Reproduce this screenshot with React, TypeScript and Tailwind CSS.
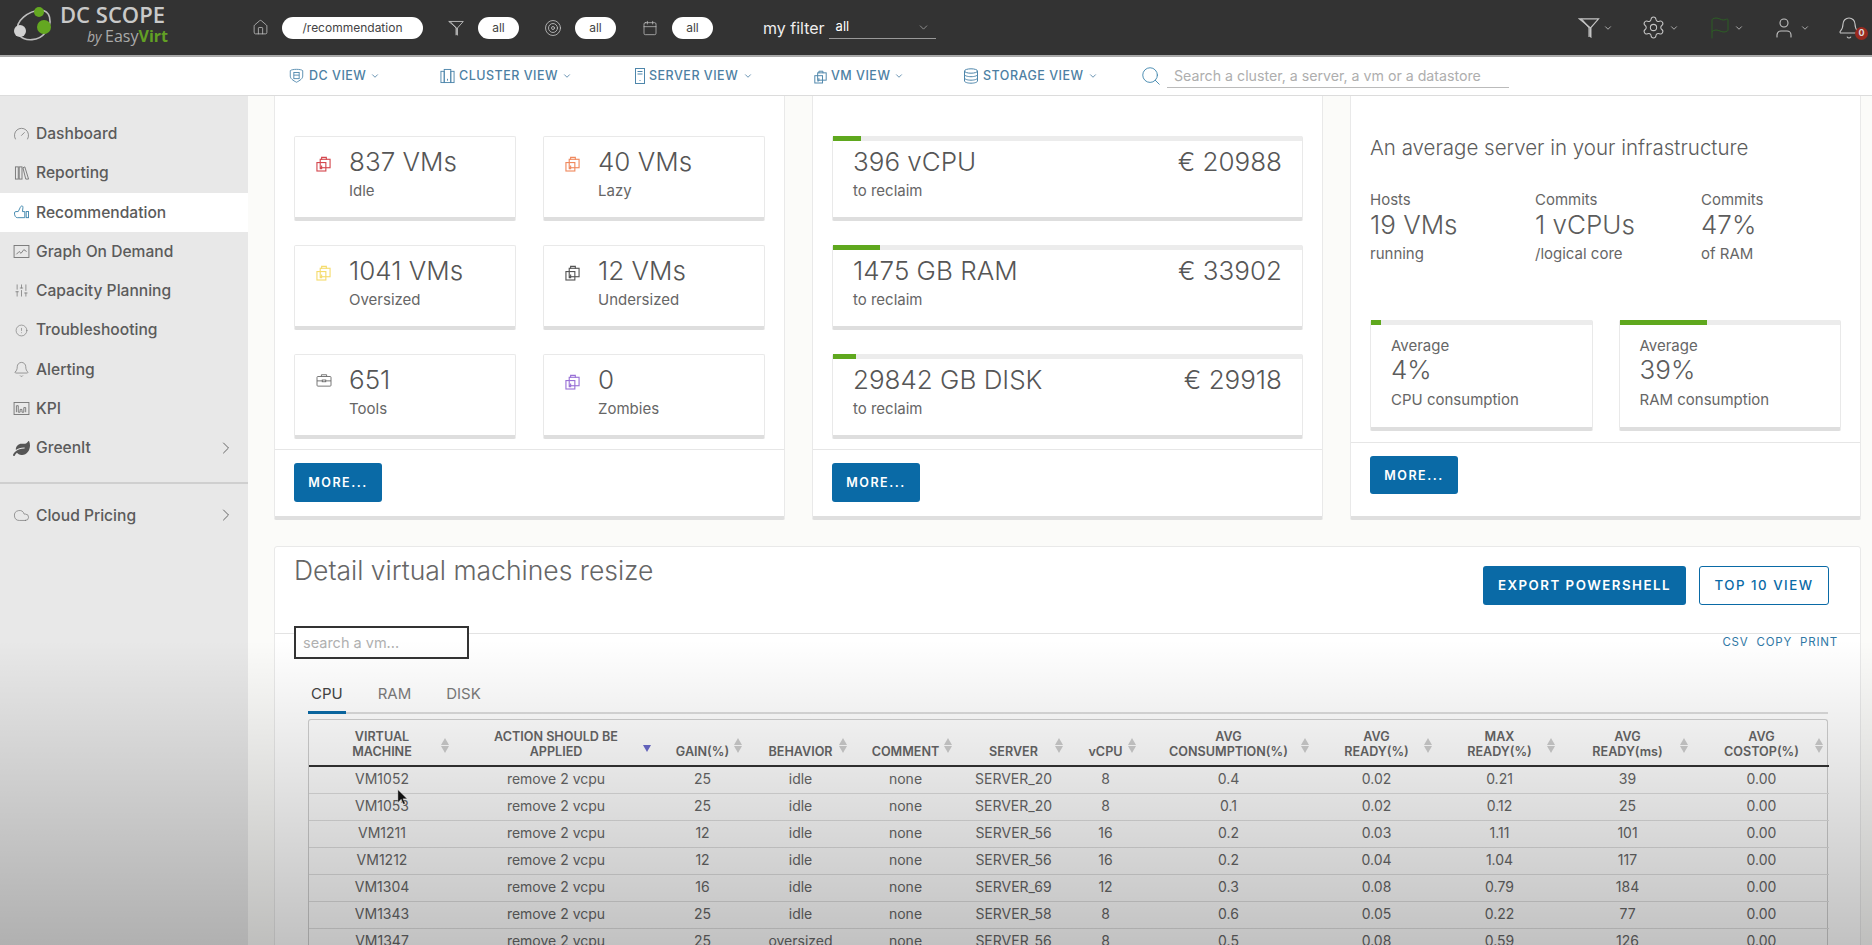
import React from "react";
import {
  Bell,
  Calendar,
  ChevronDown,
  ChevronRight,
  Cloud,
  Flag,
  Gauge,
  House,
  Search,
  Settings,
  SlidersVertical,
  Target,
  User,
  CircleAlert,
} from "lucide-react";
import { FaLeaf } from "react-icons/fa";

const FONT = "font-['Inter','Noto_Sans',sans-serif]";

// overlapping squares used for the VM counters
const VmIcon = ({ className }: { className: string }) => (
  <svg viewBox="0 0 16 18" fill="none" stroke="currentColor" strokeWidth="1.2" className={className}>
    <path d="M6 5V2.5h5V5" />
    <rect x="4.5" y="4.5" width="10.5" height="9" />
    <rect x="1" y="8" width="9.5" height="9" />
    <path d="M6 11v3.5h-2" />
  </svg>
);

const ToolboxIcon = ({ className }: { className: string }) => (
  <svg viewBox="0 0 18 16" fill="none" stroke="currentColor" strokeWidth="1" className={className}>
    <path d="M6 4V2h6v2" />
    <rect x="1" y="4" width="16" height="11" rx="1" />
    <path d="M1 9h6m4 0h6" />
    <rect x="7" y="8" width="4" height="2" />
  </svg>
);

const Funnel = ({ className }: { className: string }) => (
  <svg viewBox="0 0 22 22" fill="none" stroke="currentColor" strokeWidth="1.2" className={className}>
    <path d="M1 2h20l-8 9v10l-1 -1V11z" />
    <path d="M3 2l8 9v10" />
  </svg>
);

const ReportIcon = () => (
  <svg viewBox="0 0 16 16" fill="none" stroke="#777" strokeWidth="1" className="h-[15px] w-[16px]">
    <rect x="1" y="2" width="3" height="13" />
    <rect x="5" y="2" width="3" height="13" />
    <path d="M9 3l2-1 4 13h-3z" />
  </svg>
);

const ThumbIcon = () => (
  <svg viewBox="0 0 17 16" fill="none" stroke="#3f86ad" strokeWidth="1" className="h-[15px] w-[17px]">
    <path d="M1 8.5c0-1 .7-1.5 1.5-1.5H5l2-4c.3-1 1-2 2-2s1 1 1 2L9.500 7H12v6.500H4c-1.800 0-3-2-3-5z" />
    <rect x="13.500" y="7" width="2.500" height="6.500" />
  </svg>
);

const GraphIcon = () => (
  <svg viewBox="0 0 17 14" fill="none" stroke="#777" strokeWidth="1" className="h-[13px] w-[17px]">
    <rect x="0.500" y="0.500" width="16" height="13" />
    <path d="M3 10l3-3 2 2 3-4 3 2" />
  </svg>
);

const KpiIcon = () => (
  <svg viewBox="0 0 17 14" fill="none" stroke="#777" strokeWidth="1" className="h-[13px] w-[17px]">
    <rect x="0.500" y="0.500" width="16" height="13" />
    <path d="M3 11V4h2v7h2V8h2v3h2V6h2v5" />
  </svg>
);

const DcIcon = () => (
  <svg viewBox="0 0 18 18" fill="none" stroke="#4e86ab" strokeWidth="1" className="h-[16px] w-[17px]">
    <path d="M2 3c2-2 12-2 14 0v6c0 3-3 5-7 7-4-2-7-4-7-7z" />
    <rect x="6" y="5" width="6" height="7" />
    <path d="M6 8h6" />
  </svg>
);

const ClusterIcon = () => (
  <svg viewBox="0 0 16 16" fill="none" stroke="#4e86ab" strokeWidth="1" className="h-[16px] w-[15px]">
    <rect x="1" y="3" width="3.500" height="12" />
    <rect x="4.500" y="1" width="7" height="14" />
    <rect x="11.500" y="3" width="3.500" height="12" />
    <path d="M8 11v2" />
  </svg>
);

const ServerIcon = () => (
  <svg viewBox="0 0 10 16" fill="none" stroke="#4e86ab" strokeWidth="1" className="h-[16px] w-[10px]">
    <rect x="0.500" y="0.500" width="9" height="15" />
    <path d="M2.500 3.500h5M2.500 6h5M5 12v1" />
  </svg>
);

const StorageIcon = () => (
  <svg viewBox="0 0 16 16" fill="none" stroke="#4e86ab" strokeWidth="1" className="h-[16px] w-[16px]">
    <ellipse cx="8" cy="3" rx="6.500" ry="2.200" />
    <path d="M1.500 3v10c0 1.200 3 2.200 6.500 2.200s6.500-1 6.500-2.200V3M1.500 6.500c0 1.200 3 2.200 6.500 2.200s6.500-1 6.500-2.200M1.500 10c0 1.200 3 2.200 6.500 2.200s6.500-1 6.500-2.200" />
  </svg>
);

const Logo = () => (
  <div className="mb-[8px] flex items-center pl-[12px]">
    <svg viewBox="0 0 44 38" className="h-[38px] w-[44px]">
      <path d="M6 26C3 16 16 6 29 5c10 1 10 12 8 17" fill="none" stroke="#bdbdbd" strokeWidth="1.600" />
      <path d="M7 30c6 7 20 6 26-2" fill="none" stroke="#bdbdbd" strokeWidth="1.600" />
      <circle cx="27" cy="7" r="5" fill="#64a821" />
      <circle cx="32" cy="22" r="7" fill="#64a821" />
      <circle cx="8" cy="26" r="6" fill="#d2d2d2" />
    </svg>
    <div className="ml-[4px] flex w-[108px] flex-col font-['Open_Sans',sans-serif] text-[#c9c9c9]">
      <span className="whitespace-nowrap text-[22px] font-semibold leading-[26px]">DC SCOPE</span>
      <span className="self-end whitespace-nowrap text-[16px] leading-[18px] text-[#aaa]">
        <i className="text-[14px]">by </i>Easy<b className="text-[#62a024]">Virt</b>
      </span>
    </div>
  </div>
);

const Pill = ({ children, className }: { children: React.ReactNode; className: string }) => (
  <span className={`flex h-[22px] items-center justify-center rounded-full bg-white text-[12px] text-[#444] ${className}`}>
    {children}
  </span>
);

const TopBar = () => (
  <header className="flex h-[57px] shrink-0 items-center border-b-2 border-[#a9a9a9] bg-[#333333] text-[#c4c4c4]">
    <Logo />
    <House size={17} strokeWidth={1.1} className="ml-[84px]" />
    <Pill className="ml-[13px] w-[141px]">/recommendation</Pill>
    <Funnel className="ml-[25px] h-[16px] w-[16px]" />
    <Pill className="ml-[14px] w-[41px]">all</Pill>
    <Target size={18} strokeWidth={1.1} className="ml-[25px]" />
    <Pill className="ml-[13px] w-[41px]">all</Pill>
    <Calendar size={16} strokeWidth={1.1} className="ml-[26px]" />
    <Pill className="ml-[14px] w-[41px]">all</Pill>
    <span className="ml-[50px] whitespace-nowrap text-[16px] text-[#eee]">my filter</span>
    <div className="ml-[4px] flex h-[22px] w-[107px] items-center justify-between border-b border-[#999] pl-[7px] pr-[6px] text-[13px] text-white">
      all
      <ChevronDown size={13} strokeWidth={1.2} className="text-[#bbb]" />
    </div>
    <div className="ml-auto flex items-center pr-[11px]">
      <Funnel className="h-[21px] w-[22px]" />
      <ChevronDown size={10} className="ml-[3px]" />
      <Settings size={25} strokeWidth={1} className="ml-[28px]" />
      <ChevronDown size={10} className="ml-[3px]" />
      <Flag size={24} strokeWidth={1} className="ml-[29px] text-[#2d5f25]" />
      <ChevronDown size={10} className="ml-[2px]" />
      <User size={24} strokeWidth={1.1} className="ml-[28px]" />
      <ChevronDown size={10} className="ml-[4px]" />
      <div className="relative ml-[27px]">
        <Bell size={24} strokeWidth={1.1} />
        <span className="absolute left-[18px] top-[11px] flex h-[13px] w-[13px] items-center justify-center rounded-full bg-[#9a2a1f] text-[9px] font-bold text-[#ddd]">
          0
        </span>
      </div>
    </div>
  </header>
);

const views = [
  { label: "DC VIEW", icon: <DcIcon />, cls: "ml-[288px]", w: "w-[58px]" },
  { label: "CLUSTER VIEW", icon: <ClusterIcon />, cls: "ml-[60px]", w: "w-[100px]" },
  { label: "SERVER VIEW", icon: <ServerIcon />, cls: "ml-[63px]", w: "w-[91px]" },
  { label: "VM VIEW", icon: <VmIcon className="h-[15px] w-[13px]" />, cls: "ml-[61px]", w: "w-[60px]" },
  { label: "STORAGE VIEW", icon: <StorageIcon />, cls: "ml-[59px]", w: "w-[102px]" },
];

const ViewBar = () => (
  <nav className="flex h-[39px] shrink-0 items-center border-b border-[#dcdcdc] bg-white text-[#4d7fa3]">
    {views.map((v) => (
      <div key={v.label} className={`flex items-center ${v.cls}`}>
        <span className="text-[#4e86ab]">{v.icon}</span>
        <span className={`ml-[4px] whitespace-nowrap text-[12.500px] font-medium tracking-[0.5px] ${v.w}`}>{v.label}</span>
        <ChevronDown size={10} className="ml-[3px]" />
      </div>
    ))}
    <Search size={22} strokeWidth={1} className="ml-[42px] text-[#3f86ad]" />
    <div className="ml-[5px] flex h-[24px] w-[342px] items-center whitespace-nowrap border-b border-[#bbb] pl-[7px] text-[14.200px] text-[#aeaeae]">
      Search a cluster, a server, a vm or a datastore
    </div>
  </nav>
);

const menu = [
  { label: "Dashboard", icon: <Gauge size={18} strokeWidth={1.1} /> },
  { label: "Reporting", icon: <ReportIcon /> },
  { label: "Recommendation", icon: <ThumbIcon />, active: true },
  { label: "Graph On Demand", icon: <GraphIcon /> },
  { label: "Capacity Planning", icon: <SlidersVertical size={15} strokeWidth={1.2} /> },
  { label: "Troubleshooting", icon: <CircleAlert size={13} strokeWidth={1.2} /> },
  { label: "Alerting", icon: <Bell size={17} strokeWidth={1} /> },
  { label: "KPI", icon: <KpiIcon /> },
  { label: "GreenIt", icon: <FaLeaf size={17} className="text-[#555]" />, more: true },
];

const MenuItem = ({ item }: { item: (typeof menu)[number] }) => (
  <div className={`flex h-[39.300px] items-center pl-[13px] pr-[12px] ${item.active ? "bg-white" : ""}`}>
    <span className="flex w-[17px] justify-center text-[#777]">{item.icon}</span>
    <span className="ml-[6px] whitespace-nowrap text-[15.600px] font-medium text-[#5b5b5b]">{item.label}</span>
    {item.more && <ChevronRight size={20} strokeWidth={1.2} className="ml-auto text-[#666]" />}
  </div>
);

const Sidebar = () => (
  <aside className="w-[248px] shrink-0 bg-[#e8e8e8] pt-[18px]">
    {menu.map((item) => (
      <MenuItem key={item.label} item={item} />
    ))}
    <div className="mt-[14px] border-t-2 border-[#cfcfcf]" />
    <div className="mt-[12px]">
      <MenuItem item={{ label: "Cloud Pricing", icon: <Cloud size={19} strokeWidth={1} />, more: true }} />
    </div>
  </aside>
);

const Card = ({ children, className = "" }: { children: React.ReactNode; className?: string }) => (
  <div className={`rounded-[2px] border border-[#e9e9e9] border-b-[4px] border-b-[#dedede] bg-white ${className}`}>{children}</div>
);

const counters = [
  { value: "837 VMs", label: "Idle", color: "text-[#d4484f]", tool: false },
  { value: "40 VMs", label: "Lazy", color: "text-[#f08a5f]", tool: false },
  { value: "1041 VMs", label: "Oversized", color: "text-[#f5dc6e]", tool: false },
  { value: "12 VMs", label: "Undersized", color: "text-[#555]", tool: false },
  { value: "651", label: "Tools", color: "text-[#666]", tool: true },
  { value: "0", label: "Zombies", color: "text-[#9a72d6]", tool: false },
];

const reclaim = [
  { value: "396 vCPU", cost: "€ 20988", bar: "w-[28px]" },
  { value: "1475 GB RAM", cost: "€ 33902", bar: "w-[47px]" },
  { value: "29842 GB DISK", cost: "€ 29918", bar: "w-[23px]" },
];

const stats = [
  { top: "Hosts", value: "19 VMs", sub: "running" },
  { top: "Commits", value: "1 vCPUs", sub: "/logical core" },
  { top: "Commits", value: "47%", sub: "of RAM" },
];

const averages = [
  { value: "4%", label: "CPU consumption", bar: "w-[10px]" },
  { value: "39%", label: "RAM consumption", bar: "w-[87px]" },
];

const MoreButton = ({ h }: { h: string }) => (
  <button className={`w-[88px] rounded-[3px] bg-[#0a6aa6] pt-[2px] text-[12.500px] font-semibold tracking-[1.500px] text-white ${h}`}>
    MORE...
  </button>
);

const Panel = ({ children }: { children: React.ReactNode }) => (
  <section className="h-[424px] rounded-b-[2px] border-x border-b-[4px] border-x-[#e9e9e9] border-b-[#dfdfdf] bg-white px-[19px]">
    {children}
  </section>
);

const CounterPanel = () => (
  <Panel>
    <div className="grid grid-cols-2 gap-x-[27px] gap-y-[24px] pt-[40px]">
      {counters.map((c) => (
        <Card key={c.label} className="flex h-[85px] pl-[21px] pt-[9px]">
          <span className={`w-[33px] pt-[9px] ${c.color}`}>
            {c.tool ? <ToolboxIcon className="h-[14px] w-[16px]" /> : <VmIcon className="h-[17px] w-[15px]" />}
          </span>
          <div>
            <div className="whitespace-nowrap text-[26px] font-light leading-[32px] text-[#565656]">{c.value}</div>
            <div className="mt-[4px] text-[15px] leading-[18px] text-[#666]">{c.label}</div>
          </div>
        </Card>
      ))}
    </div>
    <div className="-mx-[19px] mt-[10px] border-t border-[#e6e6e6] px-[19px] pt-[13px]">
      <MoreButton h="h-[39px]" />
    </div>
  </Panel>
);

const ReclaimPanel = () => (
  <Panel>
    <div className="flex flex-col gap-y-[24px] pt-[40px]">
      {reclaim.map((r) => (
        <Card key={r.value} className="h-[85px] border-t-0">
          <div className="h-[5px] bg-[#ececec]">
            <div className={`h-full bg-[#5fa81e] ${r.bar}`} />
          </div>
          <div className="flex justify-between whitespace-nowrap px-[20px] pt-[5px] text-[26px] font-light leading-[32px] text-[#565656]">
            <span>{r.value}</span>
            <span>{r.cost}</span>
          </div>
          <div className="mt-[4px] pl-[20px] text-[15px] leading-[18px] text-[#666]">to reclaim</div>
        </Card>
      ))}
    </div>
    <div className="-mx-[19px] mt-[10px] border-t border-[#e6e6e6] px-[19px] pt-[13px]">
      <MoreButton h="h-[39px]" />
    </div>
  </Panel>
);

const ServerPanel = () => (
  <Panel>
    <h3 className="whitespace-nowrap pt-[39px] text-[20.500px] font-light leading-[26px] text-[#5c5c5c]">An average server in your infrastructure</h3>
    <div className="mt-[30px] grid grid-cols-[165px_166px_1fr] text-[#5c5c5c]">
      {stats.map((s) => (
        <div key={s.value}>
          <div className="text-[15px] leading-[18px] text-[#666]">{s.top}</div>
          <div className="whitespace-nowrap text-[26px] font-light leading-[32px]">{s.value}</div>
          <div className="mt-[4px] text-[15px] leading-[18px] text-[#666]">{s.sub}</div>
        </div>
      ))}
    </div>
    <div className="mt-[57px] grid grid-cols-2 gap-x-[26px]">
      {averages.map((a) => (
        <Card key={a.label} className="h-[111px] border-t-0">
          <div className="h-[5px] bg-[#ececec]">
            <div className={`h-full bg-[#5fa81e] ${a.bar}`} />
          </div>
          <div className="pl-[20px] pt-[12px] text-[#5c5c5c]">
            <div className="text-[15px] leading-[18px] text-[#666]">Average</div>
            <div className="text-[26px] font-light leading-[30px]">{a.value}</div>
            <div className="mt-[6px] text-[15px] leading-[18px] text-[#666]">{a.label}</div>
          </div>
        </Card>
      ))}
    </div>
    <div className="-mx-[19px] mt-[11px] border-t border-[#e6e6e6] px-[19px] pt-[13px]">
      <MoreButton h="h-[38px]" />
    </div>
  </Panel>
);

const columns = [
  { label: ["VIRTUAL", "MACHINE"], col: "w-[146px]" },
  { label: ["ACTION SHOULD BE", "APPLIED"], col: "w-[202px]", sorted: true },
  { label: ["GAIN(%)"], col: "w-[91px]" },
  { label: ["BEHAVIOR"], col: "w-[105px]" },
  { label: ["COMMENT"], col: "w-[105px]" },
  { label: ["SERVER"], col: "w-[111px]" },
  { label: ["vCPU"], col: "w-[73px]" },
  { label: ["AVG", "CONSUMPTION(%)"], col: "w-[173px]" },
  { label: ["AVG", "READY(%)"], col: "w-[123px]" },
  { label: ["MAX", "READY(%)"], col: "w-[123px]" },
  { label: ["AVG", "READY(ms)"], col: "w-[133px]" },
  { label: ["AVG", "COSTOP(%)"], col: "w-[135px]" },
];

const rows = [
  ["VM1052", "remove 2 vcpu", "25", "idle", "none", "SERVER_20", "8", "0.4", "0.02", "0.21", "39", "0.00"],
  ["VM1053", "remove 2 vcpu", "25", "idle", "none", "SERVER_20", "8", "0.1", "0.02", "0.12", "25", "0.00"],
  ["VM1211", "remove 2 vcpu", "12", "idle", "none", "SERVER_56", "16", "0.2", "0.03", "1.11", "101", "0.00"],
  ["VM1212", "remove 2 vcpu", "12", "idle", "none", "SERVER_56", "16", "0.2", "0.04", "1.04", "117", "0.00"],
  ["VM1304", "remove 2 vcpu", "16", "idle", "none", "SERVER_69", "12", "0.3", "0.08", "0.79", "184", "0.00"],
  ["VM1343", "remove 2 vcpu", "25", "idle", "none", "SERVER_58", "8", "0.6", "0.05", "0.22", "77", "0.00"],
  ["VM1347", "remove 2 vcpu", "25", "oversized", "none", "SERVER_56", "8", "0.5", "0.08", "0.59", "126", "0.00"],
];

const SortArrows = ({ sorted }: { sorted?: boolean }) =>
  sorted ? (
    <span className="absolute right-[6px] top-[25px] h-0 w-0 border-x-[4px] border-t-[7px] border-x-transparent border-t-[#6a6acb]" />
  ) : (
    <span className="absolute right-[6px] top-[18px] flex flex-col gap-[1px]">
      <span className="h-0 w-0 border-x-[4px] border-b-[7px] border-x-transparent border-b-[#cdcdcd]" />
      <span className="h-0 w-0 border-x-[4px] border-t-[7px] border-x-transparent border-t-[#cdcdcd]" />
    </span>
  );

const VmTable = () => (
  <div className="ml-[14px] mt-[5px] w-[1520px] rounded-t-[3px] border-x border-t border-[#cfcfcf]">
    <table className="w-full table-fixed border-collapse text-center text-[#676767]">
      <colgroup>
        {columns.map((c) => (
          <col key={c.label.join()} className={c.col} />
        ))}
      </colgroup>
      <thead>
        <tr className="h-[46px] border-b-2 border-[#333]">
          {columns.map((c) => (
            <th key={c.label.join()} className="relative px-0 pb-[6px] align-bottom text-[12.600px] font-semibold leading-[15px] text-[#666]">
              {c.label.map((l) => (
                <div key={l} className="whitespace-nowrap">{l}</div>
              ))}
              <SortArrows sorted={c.sorted} />
            </th>
          ))}
        </tr>
      </thead>
      <tbody>
        {rows.map((r) => (
          <tr key={r[0]} className="h-[27px] border-b border-[#e0e0e0]">
            {r.map((cell, i) => (
              <td key={i} className="whitespace-nowrap p-0 pb-[2px] text-[14px] leading-[17px]">{cell}</td>
            ))}
          </tr>
        ))}
      </tbody>
    </table>
  </div>
);

const DetailPanel = () => (
  <section className="mt-[26px] rounded-t-[3px] border border-[#e9e9e9] bg-white">
    <div className="flex h-[87px] justify-between border-b border-[#e3e3e3] pl-[19px] pr-[31px]">
      <h2 className="mt-[5px] whitespace-nowrap text-[26.500px] font-light leading-[36px] text-[#666]">Detail virtual machines resize</h2>
      <div className="mt-[19px] flex items-start gap-[13px]">
        <button className="h-[39px] w-[203px] rounded-[3px] bg-[#0a6aa6] text-[13.300px] font-semibold tracking-[1.500px] text-white">
          EXPORT POWERSHELL
        </button>
        <button className="h-[39px] w-[130px] rounded-[3px] border border-[#0a6aa6] bg-white text-[13.300px] font-medium tracking-[1.500px] text-[#0a6aa6]">
          TOP 10 VIEW
        </button>
      </div>
    </div>
    <div className="-mt-[8px] pl-[19px] pr-[22px]">
      <div className="flex items-start justify-between">
        <div className="flex h-[33px] w-[175px] items-center border-2 border-[#333] bg-white pl-[7px] text-[14.500px] text-[#b0b0b0]">
          search a vm...
        </div>
        <div className="mt-[8px] flex gap-[8px] text-[11.500px] tracking-[0.8px] text-[#2f78a5]">
          <span>CSV</span>
          <span>COPY</span>
          <span>PRINT</span>
        </div>
      </div>
      <div className="ml-[14px] mt-[21px] flex h-[34px] w-[1520px] border-b-2 border-[#dcdcdc] text-[15px] text-[#7b7b7b]">
        <span className="-mb-[2px] h-[34px] border-b-[3px] border-[#0a6aa6] px-[3px] pt-[3px] text-[#444]">CPU</span>
        <span className="ml-[32px] pt-[3px]">RAM</span>
        <span className="ml-[35px] pt-[3px]">DISK</span>
      </div>
      <VmTable />
    </div>
  </section>
);

export default function App() {
  return (
    <div className={`relative flex h-screen w-full flex-col overflow-hidden bg-white ${FONT}`}>
      <TopBar />
      <ViewBar />
      <div className="flex min-h-0 flex-1">
        <Sidebar />
        <main className="min-w-0 flex-1 bg-[#fbfbf9] pl-[26px] pr-[11px]">
          <div className="grid grid-cols-3 gap-x-[27px]">
            <CounterPanel />
            <ReclaimPanel />
            <ServerPanel />
          </div>
          <DetailPanel />
        </main>
      </div>
      {/* page fades to grey towards the bottom */}
      <div className="pointer-events-none absolute inset-x-0 bottom-0 h-[305px] bg-gradient-to-b from-transparent to-black/[0.24]" />
      {/* mouse pointer */}
      <svg viewBox="0 0 12 18" className="absolute left-[397px] top-[788px] h-[18px] w-[11px]">
        <path d="M1 1v14l3.500-3.500 2.500 5.500 2-1-2.500-5H11z" fill="#111" stroke="#ddd" strokeWidth="0.400" />
      </svg>
    </div>
  );
}
